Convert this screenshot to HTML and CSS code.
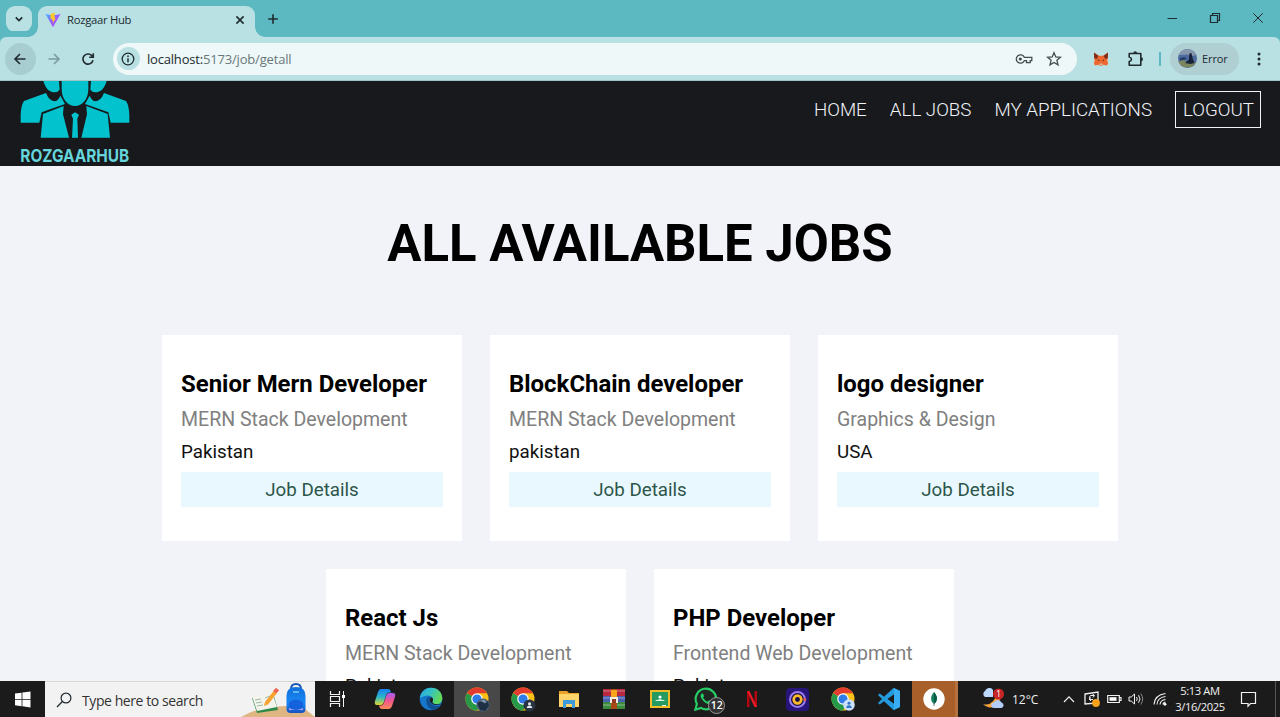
FILE: index.html
```html
<!DOCTYPE html>
<html lang="en">
<head>
<meta charset="utf-8">
<title>Rozgaar Hub</title>
<link rel="stylesheet" href="styles.css">
</head>
<body>
<svg class="defs" width="0" height="0" aria-hidden="true">
  <defs>
    <linearGradient id="vite" x1="0" y1="0" x2="1" y2="1"><stop offset="0" stop-color="#41b6ff"/><stop offset=".5" stop-color="#9a5cff"/><stop offset="1" stop-color="#b94dfb"/></linearGradient>
    <linearGradient id="edgeTop" x1="0" y1="0" x2="1" y2=".4"><stop offset="0" stop-color="#2aa8e8"/><stop offset=".5" stop-color="#35c1c4"/><stop offset="1" stop-color="#62d957"/></linearGradient>
    <linearGradient id="copA" x1="0" y1="0" x2="0" y2="1"><stop offset="0" stop-color="#1b7ff0"/><stop offset=".5" stop-color="#27b6c9"/><stop offset="1" stop-color="#e5d62d"/></linearGradient>
    <linearGradient id="copB" x1="0" y1="0" x2="0" y2="1"><stop offset="0" stop-color="#a45cf0"/><stop offset=".5" stop-color="#f0568c"/><stop offset="1" stop-color="#fb8b57"/></linearGradient>
    <linearGradient id="bag" x1="0" y1="0" x2="0" y2="1"><stop offset="0" stop-color="#1270d8"/><stop offset=".6" stop-color="#1787f5"/><stop offset="1" stop-color="#1a52c4"/></linearGradient>
    <symbol id="chrome" viewBox="0 0 24 24">
      <circle cx="12" cy="12" r="11.5" fill="#fbc116"/>
      <path d="M12 12 2.04 6.25A11.5 11.5 0 0 1 21.96 6.25H12z" fill="#e33b2e"/>
      <path d="M2.04 6.25A11.5 11.5 0 0 0 12 23.5l5-8.6-5-2.9z" fill="#279847"/>
      <circle cx="12" cy="12" r="5.8" fill="#fff"/><circle cx="12" cy="12" r="4.6" fill="#2f7be8"/>
    </symbol>
  </defs>
</svg>

<div class="screen">
  <div class="tabstrip">
    <div class="tab-search"><svg width="10" height="10" viewBox="0 0 10 10"><path d="M1.8 3.4 5 6.6 8.2 3.4" class="ink" stroke-width="1.7"/></svg></div>
    <div class="tab">
      <svg width="16" height="16" viewBox="0 0 16 16"><path d="M.5 2 8 15.3 15.5 2 8 3.5z" fill="url(#vite)"/><path d="m10.5.8-5 1 .2 5.2 1.6-.3-.4 2.2 1.3-.3-.4 3 3-5.6-1.4.2.6-2.2-1 .2z" fill="#ffc928"/></svg>
      <span class="tab-title">Rozgaar Hub</span>
      <svg width="10" height="10" viewBox="0 0 10 10"><path d="m1.4 1.4 7.2 7.2m0-7.2L1.4 8.6" class="ink" stroke-width="1.6"/></svg>
    </div>
    <svg class="new-tab" width="12" height="12" viewBox="0 0 12 12"><path d="M6 1.2v9.6M1.2 6h9.6" class="ink" stroke-width="1.6"/></svg>
    <div class="window-controls">
      <svg width="12" height="12" viewBox="0 0 12 12"><path d="M1.5 6.5h9.5" class="ink"/></svg>
      <svg width="12" height="12" viewBox="0 0 12 12"><path d="M1.5 3.5h7v7h-7zM3.5 3.5v-2h7v7h-2" class="ink" stroke-width="1.2"/></svg>
      <svg width="12" height="12" viewBox="0 0 12 12"><path d="m1.3 1.3 9.4 9.4m0-9.4-9.4 9.4" class="ink"/></svg>
    </div>
  </div>

  <div class="toolbar">
    <div class="nav-button back"><svg width="14" height="14" viewBox="0 0 14 14"><path d="M12.5 7H2.2M7 2 2 7l5 5" class="ink" stroke-width="1.6"/></svg></div>
    <div class="nav-button"><svg width="14" height="14" viewBox="0 0 14 14"><path d="M1.5 7h10.3M7 2l5 5-5 5" class="ink faded" stroke-width="1.5"/></svg></div>
    <div class="nav-button reload"><svg width="14" height="14" viewBox="0 0 14 14"><path d="M12 8.2A5.1 5.1 0 1 1 10.8 3.6l1 1.2M12.3 1.2v4.1H8.2" class="ink" stroke-width="1.6"/></svg></div>
    <div class="address">
      <div class="site-info"><svg width="14" height="14" viewBox="0 0 14 14"><circle cx="7" cy="7" r="5.8" class="ink" stroke-width="1.3"/><path d="M7 6.2v4M7 3.6v1.4" class="ink" stroke-width="1.5"/></svg></div>
      <span class="url"><b>localhost:</b>5173/job/getall</span>
      <svg class="key" width="18" height="12" viewBox="0 0 18 12"><path d="M9.3 4.3a4.2 4.2 0 1 0 0 3.4h2.2v2h3.7v-2h1.6V4.3z" class="soft" stroke-width="1.3"/><circle cx="5.3" cy="6" r="1.6" fill="#454c50"/></svg>
      <svg width="16" height="16" viewBox="0 0 16 16"><path d="m8 1.7 1.8 4.2 4.6.4-3.5 3 1.1 4.5L8 11.4l-4 2.4 1.1-4.5-3.5-3 4.6-.4z" class="soft" stroke-width="1.3"/></svg>
    </div>
    <svg class="fox" width="16" height="16" viewBox="0 0 16 16"><path d="m1 1.5 5 3.2h4l5-3.2-.2 6.5-.6 1.5.9 3-1.2 2-3.3-.8-1.3 1H6.7l-1.3-1-3.3.8-1.2-2 .9-3L1.2 8z" fill="#f0672e"/><path d="m1 1.5 4.500 3.400-2 3L1.200 7zm14 0-4.500 3.400 2 3L14.800 7z" fill="#7c2d1b"/><path d="m4.500 8.300 2 .9-.5 1.200zm7 0-2 .9.5 1.200z" fill="#34323d"/><path d="M6.500 12.400h3l.3 1.800H6.200z" fill="#d8b6a2"/></svg>
    <svg class="puzzle" width="18" height="18" viewBox="0 0 18 18"><path d="M2.200 3.500h11.600v11.700H2.200v-3.600c3-.8 3-3.700 0-4.500z" class="ink" stroke-width="1.600" stroke-linejoin="round"/><path d="M6.300 3.200a1.900 1.900 0 0 1 3.800 0zM14 7.200a2 2 0 0 1 0 4z" fill="#202b30"/></svg>
    <i class="divider"></i>
    <div class="profile">
      <svg width="19" height="19" viewBox="0 0 19 19"><circle cx="9.500" cy="9.500" r="9.500" fill="#4d6b9f"/><path d="M.8 5.900a9.500 9.500 0 0 1 17.400 0l-4 1L9 5.400z" fill="#8798ae"/><path d="M.5 12.500 6 10.800l3 3.200 9-1a9.500 9.500 0 0 1-17.500-.5z" fill="#7b855e"/><path d="m7 14 4-3.500.3-6L13.400 4l1.600 6.500 1.500 3.500-4 1z" fill="#172238"/><path d="m2 9 4-1 3 1.500-3 1.500-4 .5z" fill="#263f69"/></svg>
      <span>Error</span>
    </div>
    <svg class="menu" width="4" height="16" viewBox="0 0 4 16"><g fill="#202b30"><circle cx="2" cy="3" r="1.500"/><circle cx="2" cy="8" r="1.500"/><circle cx="2" cy="13" r="1.500"/></g></svg>
  </div>

  <main class="page">
    <header class="site-header">
      <svg class="logo" width="150" height="85" viewBox="0 0 150 85">
        <g transform="translate(0 -81) scale(.33333)" fill="#02c2ce">
          <path d="M130 243c6 22 18 34 34 34q9 0 15-8l-2-26zM320 243c-6 22-18 34-34 34q-9 0-15-8l2-26z"/>
          <path d="M185 243h80v24c0 30-18 51-40 51s-40-21-40-51z"/>
          <path d="M62 368v-22q1-30 10-43l66-24q10 25 27 25 10-3 16-17l14 25-70 25-7 31zM388 368v-22q-1-30-10-43l-66-24q-10 25-27 25-10-3-16-17l-14 25 70 25 7 31z"/>
          <path d="m122 413 7-71 62-24-2 25 18 70zM330 413l-7-71-64-24 2 25-17 70zM216 413l3-57-5-12 11-7 12 7-5 12 2 57z"/>
        </g>
        <text x="20.300" y="81.300" textLength="109" lengthAdjust="spacingAndGlyphs">ROZGAARHUB</text>
      </svg>
      <nav class="site-nav"><a>HOME</a><a>ALL JOBS</a><a>MY APPLICATIONS</a><a class="logout">LOGOUT</a></nav>
    </header>
    <h1>ALL AVAILABLE JOBS</h1>
    <section class="jobs">
      <article class="card"><h2>Senior Mern Developer</h2><p class="category">MERN Stack Development</p><p>Pakistan</p><a class="details">Job Details</a></article>
      <article class="card"><h2>BlockChain developer</h2><p class="category">MERN Stack Development</p><p>pakistan</p><a class="details">Job Details</a></article>
      <article class="card"><h2>logo designer</h2><p class="category">Graphics &amp; Design</p><p>USA</p><a class="details">Job Details</a></article>
      <article class="card"><h2>React Js</h2><p class="category">MERN Stack Development</p><p>Pakistan</p></article>
      <article class="card"><h2>PHP Developer</h2><p class="category">Frontend Web Development</p><p>Pakistan</p></article>
    </section>
  </main>

  <footer class="taskbar">
    <div class="start"><svg width="16" height="17" viewBox="0 0 16 17"><path d="m0 2.600 6.600-.9v6.200H0zM7.400 1.600 15.500.5v7.400H7.400zM0 8.700h6.600v6.500L0 14.300zm7.400 0h8.100v7.700l-8.100-1.100z" fill="#fff"/></svg></div>
    <div class="search">
      <svg width="16" height="16" viewBox="0 0 16 16"><circle cx="10" cy="6" r="4.900" class="ink" stroke-width="1.200"/><path d="M6.400 9.500 1 15" class="ink" stroke-width="1.300"/></svg>
      <span>Type here to search</span>
      <svg class="doodle" width="74" height="35" viewBox="0 0 74 35">
        <path d="M0 35q14-8 30-10l29-2 15 12z" fill="#dfb681"/>
        <path d="m11 16 21-5 5 17-21 3z" fill="#2d8a49"/><path d="m11 14.500 10-1.500 5 14-10 2zM21 13l10-3 5 15-10 2z" fill="#f4f4ed"/><path d="m14 18 6-1m-5 4 6-1m-5 4 6-1m2-7 5-2m-4 5 5-2" stroke="#9dbba3"/>
        <path d="m24 20 9-11.500 3 2.600-9 11.300-4 1.600z" fill="#f6a330"/><path d="m32 9 3-3.300 3.200 2.600-3 3.300z" fill="#ee6755"/>
        <path d="M50 7q0-5 5-5t5 5" fill="none" stroke="#1858b8" stroke-width="2"/><path d="M45.500 14q0-9 9.500-9t9.500 9v13q0 4-4 4h-11q-4 0-4-4z" fill="url(#bag)"/><path d="M48 20q7-5 14 0v8H48z" fill="#1463dc"/><path d="M48 26q7 4 14 0v2H48z" fill="#b9a7f4"/><path d="M52 10h6" stroke="#77c8ff" stroke-width="1.500"/>
      </svg>
    </div>
    <div class="apps">
      <div class="app task-view"><svg width="18" height="18" viewBox="0 0 18 18"><path d="M2.500 1v3.500h9V1M2.500 17v-3.500h9V17M2.500 6.500h9v5h-9z" fill="none" stroke="#f2f2f2" stroke-width="1.200"/><path d="M15.500 1v16" stroke="#f2f2f2"/><path d="M14 5h3v3h-3z" fill="#fff"/></svg></div>
      <div class="app"><svg width="22" height="22" viewBox="0 0 22 22"><path d="M7 1h7q2 0 2.600 2L17 4.500h-2q-2 0-2.700 2L9.500 15q-.7 2-2.600 2H3q-3 0-2-4L4 4q.8-3 3-3z" fill="url(#copA)"/><path d="M15 21H8q-2 0-2.600-2L5 17.500h2q2 0 2.700-2L12.500 7q.7-2 2.600-2H19q3 0 2 4l-3 9q-.8 3-3 3z" fill="url(#copB)"/></svg></div>
      <div class="app"><svg width="24" height="24" viewBox="0 0 24 24"><circle cx="12" cy="12" r="11.300" fill="#1676cc"/><path d="M1 11C1.500 5 6 .7 12 .7c7 0 11.300 5 11.300 10.500 0 4-3 6-6.300 6-3 0-4.500-1.200-3.500-2.600 1.400-2 .3-6.100-4.500-6.100-3.500 0-6.500 1.500-8 2.500z" fill="url(#edgeTop)"/><path d="M9.500 9.700C5.500 12 7 20 13 22.800c3 .2 6.500-1.300 8.500-4.400-2 1-5.500 1-8.300-.8-3-2-4-5.500-1.300-7.400z" fill="#124f91"/><path d="M13.500 14.600c1.200-1.700.4-3.600-1-4.400-3 1.800-2 5.500 1.500 7 3 1.300 6 1 7.700.3-1 .2-9.500 0-8.200-2.900z" fill="#1b1b1b"/></svg></div>
      <div class="app active"><svg class="shift" width="25" height="25" viewBox="0 0 25 25"><use href="#chrome" width="24" height="24"/><circle cx="18" cy="18" r="6.500" fill="#49617e"/><path d="m12 16 5-2 2 3 4-3 1 5-4 5-5-1z" fill="#1e3044"/><path d="m15 14 4-1 3 3-3-1z" fill="#9aabb8"/></svg></div>
      <div class="app"><svg class="shift" width="25" height="25" viewBox="0 0 25 25"><use href="#chrome" width="24" height="24"/><circle cx="18.500" cy="18.500" r="6" fill="#293442"/><circle cx="18.500" cy="16.800" r="1.500" fill="#e7ecf2"/><path d="M15.800 21q0-2.500 2.700-2.500t2.700 2.500z" fill="#e7ecf2"/></svg></div>
      <div class="app"><svg width="22" height="20" viewBox="0 0 22 20"><path d="M1 2h8l2 2h10v14H1z" fill="#e6a327"/><path d="M1 5h20v13H1z" fill="#ffd46a"/><path d="M5 11h12v8h-3v-4H8v4H5z" fill="#3d9bdc"/></svg></div>
      <div class="app"><svg width="24" height="22" viewBox="0 0 24 22"><path d="M1 1h22v7H1z" fill="#b9283e"/><path d="M1 8h22v6H1z" fill="#4960b4"/><path d="M1 14h22v7H1z" fill="#3c8b3d"/><path d="M1 3h22M1 10h22M1 17h22" stroke="#eee" stroke-opacity=".45"/><path d="M9 1h6v20H9z" fill="#a74a16"/><path d="M9 2h6v7H9z" fill="#f6a51c"/><path d="M8 9h8v6H8z" fill="#f2ede5"/><path d="M10 11h4v4h-4z" fill="#8c3c22"/></svg></div>
      <div class="app"><svg width="22" height="20" viewBox="0 0 22 20"><path d="M1 1h20v18H1z" fill="#f0bd26"/><path d="M3 3h16v14H3z" fill="#259b62"/><circle cx="11" cy="8" r="1.600" fill="#fff"/><path d="M6 12q2-2 3-1 2-2 4 0 1-1 3 1z" fill="#d9f3e5"/><path d="M13 16h4v1h-4z" fill="#e8f4e8"/></svg></div>
      <div class="app whatsapp"><svg width="24" height="24" viewBox="0 0 24 24"><path d="m1.300 22.700 1.600-5.800A10.300 10.300 0 1 1 7 21z" fill="#202722" stroke="#26cf66" stroke-width="2.100"/><path d="M8 6.500c-1.500.8-1.800 2.700-.8 4.600 1.500 3 4 5.200 7.300 6 1.500.3 3-.8 3.200-2.400l-2.800-1.500-1.400 1.500c-2-.8-3.500-2.300-4.500-4.200l1.100-1.300L9 6.500z" fill="#26cf66"/></svg><span class="badge">12</span></div>
      <div class="app"><svg width="10" height="18" viewBox="0 0 12 18" preserveAspectRatio="none"><path d="M1.500 1v16M10.500 1v16" stroke="#b20710" stroke-width="3"/><path d="M0 1h3l9 16H9z" fill="#ed1b27"/></svg></div>
      <div class="app"><svg width="23" height="23" viewBox="0 0 23 23"><rect width="23" height="23" rx="4" fill="#271579"/><circle cx="11.500" cy="11.500" r="7.500" fill="#171141" stroke="#9b7bf2" stroke-width="2"/><circle cx="11.500" cy="11.500" r="3.800" fill="none" stroke="#ffba2c" stroke-width="2.700"/><circle cx="18.800" cy="11.500" r="1.500" fill="#e75e5b"/></svg></div>
      <div class="app"><svg class="shift" width="25" height="25" viewBox="0 0 25 25"><use href="#chrome" width="24" height="24"/><circle cx="18" cy="18" r="5.800" fill="#cce0fa"/><circle cx="18" cy="16.300" r="1.500" fill="#3472c4"/><path d="M15.300 21q0-2.800 2.700-2.800t2.700 2.800z" fill="#3472c4"/></svg></div>
      <div class="app"><svg width="24" height="24" viewBox="0 0 24 24"><path d="m16.500 1 6.500 3v16l-6.500 3L7 14.200l-4.300 3.200L1 16l4-4-4-4 1.700-1.400L7 9.800zM17 7.200 10.500 12l6.500 4.800z" fill="#259bdf" fill-rule="evenodd"/><path d="m17 1 6 3v16l-6 3z" fill="#38adf3"/></svg></div>
      <div class="app mongo"><svg width="22" height="22" viewBox="0 0 22 22"><circle cx="11" cy="11" r="10.700" fill="#fff"/><path d="M11 4c3.200 3.600 4.500 8.500 0 12-4.500-3.500-3.200-8.400 0-12z" fill="#16805e"/><path d="M11 4c3.200 3.600 4.500 8.500 0 12z" fill="#075a48"/><path d="M11 14v4" stroke="#577" stroke-width="1"/></svg></div>
    </div>
    <div class="tray">
      <svg class="weather" width="24" height="22" viewBox="0 0 24 22"><path d="M17 4a9 9 0 1 1-15 12q10 3 15-12z" fill="#f6a43b"/><path d="M4 9a3.500 3.500 0 0 1 0-6 4.500 4.500 0 0 1 8-1v7z" fill="#bdd8ff"/><path d="M13 20a2.700 2.700 0 0 1 0-5.400 4 4 0 0 1 7.500 0 2.800 2.800 0 0 1 0 5.400z" fill="#b1ccf8"/><circle cx="17.500" cy="6" r="5.500" fill="#c82526"/><text x="17.500" y="9.300">1</text></svg>
      <span class="temperature">12°C</span>
      <svg class="chevron" width="12" height="8" viewBox="0 0 12 8"><path d="m1 7 5-5.200L11 7" class="light" stroke-width="1.200"/></svg>
      <svg class="update" width="18" height="16" viewBox="0 0 18 16"><path d="m2 3 13-2v11L2 13z" class="light" stroke-width="1.300"/><path d="M11 4.500H7.500q-2 1.500-.5 4h3M9.500 3l2 1.500L10 6.500M8 6.500 6 8l2 2" class="light"/><circle cx="13" cy="12" r="3.900" fill="#f7a01b"/></svg>
      <svg class="battery" width="15" height="10" viewBox="0 0 15 10"><path d="M.7 1.500h11.600v7H.7zM12.500 3.500h1.500v3h-1.500" class="light" stroke-width="1.200"/><path d="M2.500 3.200h7v3.600h-7z" fill="#fff"/></svg>
      <svg class="volume" width="16" height="14" viewBox="0 0 16 14"><path d="M1 5h2.200L6.500 2v10L3.200 9H1z" class="light"/><path d="M8.500 5q1.500 2 0 4M10.500 3.200q3 3.800 0 7.600" class="light"/><path d="M12.700 1.500q4 5.500 0 11" class="light dim"/></svg>
      <svg class="wifi" width="14" height="14" viewBox="0 0 14 14"><path d="M1 12.500Q1.500 3 12.500 1.500M4 12.500Q4.500 5.500 12.500 4.500M7 12.500q.5-4.500 5.500-5M10 12.500q0-2 2.500-2.500" class="light" stroke-width="1.100"/><circle cx="12" cy="12.300" r="1.400" fill="#fff"/></svg>
      <div class="clock"><span class="time">5:13 AM</span><span>3/16/2025</span></div>
      <svg class="notice" width="17" height="17" viewBox="0 0 17 17"><path d="M1.500 1.500h14v11h-5L8 15.200V12.500H1.500z" class="light" stroke-width="1.200"/></svg>
      <i class="peek"></i>
    </div>
  </footer>
</div>
</body>
</html>
```
FILE: styles.css
```css
* { box-sizing: border-box; }
body { margin: 0; overflow: hidden; font-family: "Open Sans", "Noto Sans", sans-serif; }
svg { display: block; flex: none; }
.defs { position: absolute; }
.ink { fill: none; stroke: #202b30; }
.soft { fill: none; stroke: #454c50; }
.faded { stroke: #7b999e; }
.light { fill: none; stroke: #f1f1f1; }
.dim { stroke: #888; }
.screen { width: 1280px; height: 717px; display: flex; flex-direction: column; overflow: hidden; }

.tabstrip { height: 37px; flex: none; display: flex; align-items: flex-start; padding: 6px 14px 0 6px; background: #5cb8c1; }
.tab-search { width: 26px; height: 26px; border-radius: 9px; display: grid; place-items: center; background: #b9e1e4; }
.tab { width: 217px; height: 31px; margin-left: 6px; padding: 0 10px 4px 7px; display: flex; align-items: center; border-radius: 9px 9px 0 0; background: #b9e1e4; position: relative; }
.tab::before, .tab::after { content: ""; position: absolute; bottom: 0; width: 10px; height: 10px; }
.tab::before { left: -10px; background: radial-gradient(circle at 0 0, transparent 9.5px, #b9e1e4 10px); }
.tab::after { right: -10px; background: radial-gradient(circle at 100% 0, transparent 9.5px, #b9e1e4 10px); }
.tab-title { flex: 1; margin-left: 6px; font-size: 11.3px; letter-spacing: -.3px; color: #202b30; }
.new-tab { margin: 7px 0 0 12px; }
.window-controls { margin: 6px 2px 0 auto; display: flex; gap: 31px; }

.toolbar { height: 44px; flex: none; display: flex; align-items: center; padding: 0 19px 0 5px; background: #b9e1e4; border-bottom: 1px solid #9fc4c7; border-radius: 6px 6px 0 0; box-shadow: 0 -6px 0 0 #5cb8c1; }
.nav-button { width: 31px; height: 32px; display: grid; place-items: center; border-radius: 50%; margin-right: 3px; }
.back { background: #a7cdd1; }
.reload { margin-right: 9px; }
.address { width: 965px; height: 32px; display: flex; align-items: center; padding: 0 15px 0 4px; border-radius: 16px; background: #eef8f8; }
.site-info { width: 23px; height: 23px; border-radius: 50%; display: grid; place-items: center; background: #b9e1e4; }
.url { flex: 1; margin-left: 7px; font-size: 13px; color: #69777a; letter-spacing: -.18px; }
.url b { font-weight: 400; color: #202b30; }
.key { margin-right: 13px; }
.fox { margin-left: 16px; }
.puzzle { margin-left: 18px; }
.divider { width: 2px; height: 14px; margin: 0 9px 0 14px; background: #5cb8c1; }
.profile { width: 69px; height: 32px; border-radius: 16px; display: flex; align-items: center; padding-left: 8px; gap: 5px; font-size: 11px; letter-spacing: -.1px; color: #202b30; background: #b0cfd3; }
.menu { margin-left: 18px; }

.page { height: 600px; flex: none; overflow: hidden; background: #f1f3f8; font-family: Roboto, sans-serif; }
.site-header { height: 85px; display: flex; justify-content: space-between; background: #18191c; }
.logo text { font: 700 17.8px Inter, sans-serif; fill: #66d5dc; }
.site-nav { display: flex; align-items: flex-start; padding: 10px 19px 0 0; gap: 23px; font-size: 18.75px; font-weight: 300; line-height: 36px; color: #f1f3f8; }
.site-nav a { padding-top: 1px; }
.site-nav .logout { width: 86px; height: 37px; padding: 0 7px; border: 1px solid #f1f3f8; }
h1 { margin: 48px 0 61px; height: 60px; text-align: center; font-size: 50.9px; line-height: 60px; font-weight: 700; color: #000; }
.jobs { width: 984px; margin: 0 auto; display: flex; flex-wrap: wrap; justify-content: center; gap: 28px; }
.card { width: 300px; height: 206px; padding: 32px 19px 0; background: #fff; }
.card h2 { margin: 0; font-size: 23.95px; line-height: 34px; font-weight: 700; color: #000; white-space: nowrap; }
.card p { margin: 0; font-size: 18.75px; line-height: 32px; color: #101010; }
.card .category { margin-top: 3px; font-size: 19.53px; color: gray; white-space: nowrap; }
.details { display: block; height: 35px; margin-top: 4px; padding-top: 1px; text-align: center; font-size: 18.75px; line-height: 35px; color: #2d5649; background: #e9f8ff; }

.taskbar { height: 36px; flex: none; display: flex; background: #1b1b1b; color: #f1f1f1; }
.start { width: 45px; display: grid; place-items: center; }
.search { width: 270px; display: flex; align-items: center; padding-left: 11px; border-top: 1px solid #d5d5d5; background: #f2f2f2; color: #333; font-size: 14px; }
.search span { margin-left: 10px; margin-top: 2px; flex: 1; letter-spacing: -.42px; white-space: nowrap; }
.doodle { align-self: flex-end; }
.apps { display: flex; }
.app { width: 45.8px; display: grid; place-items: center; }
.task-view { width: 47.6px; padding-right: 3px; }
.active { background: #484848; }
.shift { margin-left: 1px; }
.whatsapp { position: relative; }
.badge { position: absolute; left: 25px; top: 16px; width: 17px; height: 17px; border: 1px solid #9a9a9a; border-radius: 50%; background: #333; color: #fff; font-size: 10.5px; line-height: 15px; font-weight: 600; text-align: center; }
.mongo { background: #a85f29; border-right: 3px solid #b5723f; }
.tray { flex: 1; display: flex; align-items: center; font-size: 12px; }
.weather { margin-left: 23px; }
.weather text { fill: #fff; font-size: 9px; text-anchor: middle; }
.temperature { width: 30px; margin-left: 7px; white-space: nowrap; }
.chevron { margin-left: 21px; }
.update { margin-left: 8px; }
.battery { margin-left: 6px; }
.volume { margin-left: 6px; }
.wifi { margin-left: 9px; }
.clock { width: 56px; margin-left: 5px; display: flex; flex-direction: column; align-items: center; font-size: 11.2px; letter-spacing: -.38px; line-height: 16px; white-space: nowrap; }
.notice { margin-left: 12px; }
.peek { width: 1px; height: 36px; margin-left: auto; margin-right: 4px; background: #555; }
```
